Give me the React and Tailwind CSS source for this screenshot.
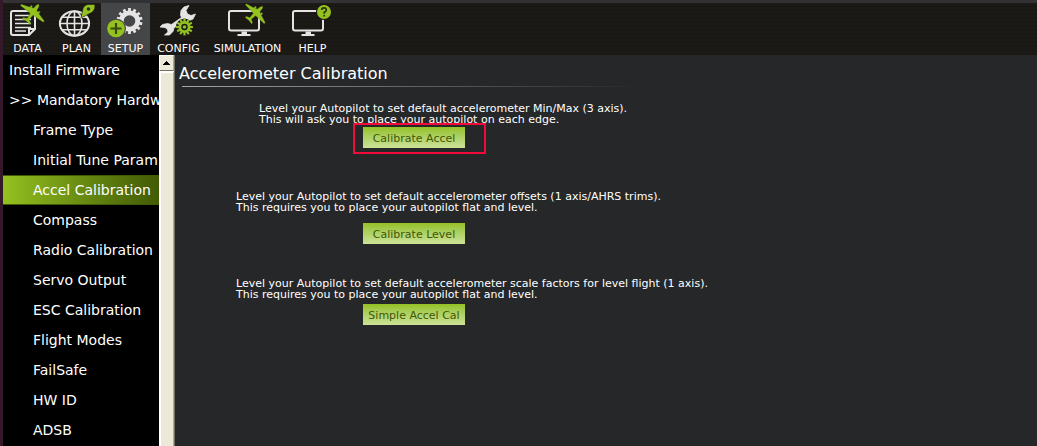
import React from 'react';

const LIME = '#93c11f';

function Plane({ x, y, turn = 45, size = 1 }) {
  return (
    <path
      transform={`translate(${x} ${y}) rotate(${turn}) scale(${size})`}
      fill={LIME}
      stroke="#3f560c"
      strokeWidth="0.3"
      d="M0-11C1.2-10.6 1.9-8.5 1.9-5L4-4V-5.6H5.8V-3.2L14.5-0.6V1.2L1.8 1.6L1.2 7.5L5 9.4V11L0 10.4L-5 11V9.4L-1.2 7.5L-1.8 1.6L-14.5 1.2V-0.6L-5.8-3.2V-5.6H-4V-4L-1.9-5C-1.9-8.5-1.2-10.6 0-11Z"
    />
  );
}

function Gear({ x, y, r, hole, teeth, color, width }) {
  const mid = (r + hole) / 2;
  return (
    <g transform={`translate(${x} ${y})`} stroke={color} fill="none">
      <circle r={mid - 0.6} strokeWidth={r - hole - 1.2} />
      {Array.from({ length: teeth }, (_, i) => (
        <path key={i} d={`M0 ${-mid}V${-r - 1.2}`} strokeWidth={width} transform={`rotate(${(i * 360) / teeth})`} />
      ))}
    </g>
  );
}

function Monitor() {
  return (
    <>
      <rect x="0" y="7" width="30" height="19.5" rx="2" fill="none" stroke="#e4e4e4" strokeWidth="2" />
      <path d="M12.5 27.5h5.5v2.5h3.5v2H8.500v-2h4z" fill="#e4e4e4" />
    </>
  );
}

function Icon({ children }) {
  return (
    <svg aria-hidden="true" viewBox="0 0 37 36" className="h-9 w-[37px] overflow-visible">
      {children}
    </svg>
  );
}

const DataIcon = () => (
  <Icon>
    <path d="M4 7H26V25L20 31H4Q2 31 2 29V9Q2 7 4 7ZM26 25H20V31" fill="none" stroke="#e4e4e4" strokeWidth="2" />
    <path d="M6 11.5H20M6 15.5H22M6 19.5H22M6 23.5H22M6 27H17" stroke="#e4e4e4" strokeWidth="1.6" />
    <Plane x={23.5} y={9} turn={36} size={0.98} />
  </Icon>
);

const PlanIcon = () => (
  <Icon>
    <g fill="none" stroke="#e4e4e4" strokeWidth="1.6">
      <ellipse cx="16.5" cy="19.5" rx="14.6" ry="12.2" strokeWidth="2" />
      <ellipse cx="16.5" cy="19.5" rx="7.5" ry="12.2" />
      <path d="M16.5 7V32M2 19.5H31M4.5 13.3H28.5M4.5 25.7H28.5" />
    </g>
    <path d="M23 14L25 4.5C26 1.5 28.500 0.500 31 0.500H36.500C37.500 3 36.500 6.500 33.500 8.500Z" fill={LIME} stroke="#202010" strokeWidth="0.6" strokeLinejoin="round" />
    <circle cx="30.5" cy="5" r="1.8" fill="#30331d" />
  </Icon>
);

const SetupIcon = () => (
  <Icon>
    <Gear x={22.5} y={17} r={11.8} hole={5.8} teeth={14} width={2.8} color="#e4e4e4" />
    <circle cx="9" cy="24.5" r="10" fill="#454648" />
    <circle cx="9" cy="24.5" r="8.8" fill={LIME} />
    <path d="M9 19V30M3.5 24.5H14.5" stroke="#36480c" strokeWidth="2.2" />
  </Icon>
);

const ConfigIcon = () => (
  <Icon>
    <path
      d="M29 1.5L24 3L21 6.5L20.5 11L21.5 13.5L11.5 20.5L7.5 19.5L2.500 20.500L0 23L5 23.5L7.5 25.5L8 28L4.5 31L9.5 31L13 27.5L14 24L24 16.5L28.5 17L33 15L35.500 10L31 11.500L27.500 10L26 6.500Z"
      fill="#e4e4e4"
      stroke="#e4e4e4"
      strokeWidth="0.8"
      strokeLinejoin="round"
    />
    <circle cx="24.5" cy="23" r="8.6" fill="#1a1815" />
    <Gear x={24.5} y={23} r={7.2} hole={3.2} teeth={12} width={2.2} color={LIME} />
    <circle cx="24.5" cy="23" r="1.8" fill={LIME} />
  </Icon>
);

const SimulationIcon = () => (
  <Icon>
    <Monitor />
    <Plane x={26.5} y={9.5} turn={45} size={0.92} />
  </Icon>
);

const HelpIcon = () => (
  <Icon>
    <g transform="translate(-1 0)">
      <Monitor />
    </g>
    <circle cx="30" cy="8" r="8" fill="#1a1815" />
    <circle cx="30" cy="8" r="7" fill={LIME} />
    <path d="M27.7 6Q27.7 3.9 30 3.9Q32.3 3.9 32.3 6Q32.3 7.4 30.2 8.4V9.8M30.2 11V12.5" fill="none" stroke="#28350a" strokeWidth="1.7" />
  </Icon>
);

const tools = [
  { label: 'DATA', icon: DataIcon, width: 'w-[49px]' },
  { label: 'PLAN', icon: PlanIcon, width: 'w-[49px]' },
  { label: 'SETUP', icon: SetupIcon, width: 'w-[49px]', active: true },
  { label: 'CONFIG', icon: ConfigIcon, width: 'w-[57px]' },
  { label: 'SIMULATION', icon: SimulationIcon, width: 'w-[81px]' },
  { label: 'HELP', icon: HelpIcon, width: 'w-[49px]' },
];

const pages = [
  { label: 'Install Firmware', top: true },
  { label: '>> Mandatory Hardw', top: true },
  { label: 'Frame Type' },
  { label: 'Initial Tune Param' },
  { label: 'Accel Calibration', active: true },
  { label: 'Compass' },
  { label: 'Radio Calibration' },
  { label: 'Servo Output' },
  { label: 'ESC Calibration' },
  { label: 'Flight Modes' },
  { label: 'FailSafe' },
  { label: 'HW ID' },
  { label: 'ADSB' },
];

function ActionButton({ children }) {
  return (
    <button className="block h-[21px] w-[102px] whitespace-nowrap bg-linear-to-b from-[#94c11f] to-[#cde296] pt-[3px] text-center text-[11px] leading-[18px] text-[#405704]">
      {children}
    </button>
  );
}

export default function App() {
  return (
    <div className="flex h-screen flex-col overflow-hidden border-l-[3px] border-[#35192b] bg-[#262729] font-['DejaVu_Sans',sans-serif] text-white">
      <header className="shrink-0 border-t-[3px] border-[#323133] bg-[#1a1815] bg-[repeating-linear-gradient(0deg,#1a1815_0px,#1a1815_2px,#1e1b18_3px,#1a1815_4px)]">
        <nav className="flex">
          {tools.map(({ label, icon: ToolIcon, width, active }) => (
            <button key={label} className={`flex h-[52px] flex-col items-center pt-px ${width} ${active ? 'bg-[#454648]' : ''}`}>
              <ToolIcon />
              <span className="mt-0.5 text-[11px] leading-[13px]">{label}</span>
            </button>
          ))}
        </nav>
      </header>

      <div className="flex min-h-0 flex-1">
        <nav className="w-[156px] shrink-0 overflow-hidden bg-black">
          {pages.map(({ label, top, active }) => (
            <a
              key={label}
              href="#"
              className={`block h-[30px] whitespace-nowrap text-sm ${top ? 'pl-1.5' : 'pl-[30px]'} ${
                active ? 'border-y border-[#425a06] bg-linear-to-r from-[#94c11f] to-[#425a06] leading-7' : 'leading-[30px]'
              }`}
            >
              {label}
            </a>
          ))}
        </nav>

        <div className="flex w-4 shrink-0 flex-col border-r border-[#716f64] bg-[#ece9d8]">
          <button
            aria-label="Scroll up"
            className="flex h-4 items-center justify-center border-t border-r border-b border-l border-t-white border-r-[#aca899] border-b-[#716f64] border-l-white bg-[#ece9d8]"
          >
            <svg aria-hidden="true" viewBox="0 0 7 4" className="h-1 w-[7px]" shapeRendering="crispEdges">
              <path d="M3 0h1v1h1v1h1v1h1v1H0V3h1V2h1V1h1z" fill="#000" />
            </svg>
          </button>
          <div className="flex-1 border-t-2 border-r border-l-2 border-t-white border-r-[#aca899] border-l-white" />
        </div>

        <main className="min-w-0 flex-1 text-[11px] leading-[11px]">
          <h1 className="pt-2 pl-1 text-base leading-[22px]">Accelerometer Calibration</h1>
          <div className="mt-px ml-[7px] h-px max-w-[460px] bg-linear-to-r from-[#a5a5a6] to-[#262729]" />

          <section className="mt-4">
            <p className="pl-[84px]">
              Level your Autopilot to set default accelerometer Min/Max (3 axis).
              <br />
              This will ask you to place your autopilot on each edge.
            </p>
            <div className="relative mt-0.5 ml-[188px] w-[102px]">
              <ActionButton>Calibrate Accel</ActionButton>
              <div className="pointer-events-none absolute -top-1 -left-2.5 h-[31px] w-[133px] border-2 border-[#f3093a]" />
            </div>
          </section>

          <section className="mt-[43px]">
            <p className="pl-[61px]">
              Level your Autopilot to set default accelerometer offsets (1 axis/AHRS trims).
              <br />
              This requires you to place your autopilot flat and level.
            </p>
            <div className="mt-2.5 ml-[188px]">
              <ActionButton>Calibrate Level</ActionButton>
            </div>
          </section>

          <section className="mt-[34px]">
            <p className="pl-[61px]">
              Level your Autopilot to set default accelerometer scale factors for level flight (1 axis).
              <br />
              This requires you to place your autopilot flat and level.
            </p>
            <div className="mt-1 ml-[188px]">
              <ActionButton>Simple Accel Cal</ActionButton>
            </div>
          </section>
        </main>
      </div>
    </div>
  );
}
